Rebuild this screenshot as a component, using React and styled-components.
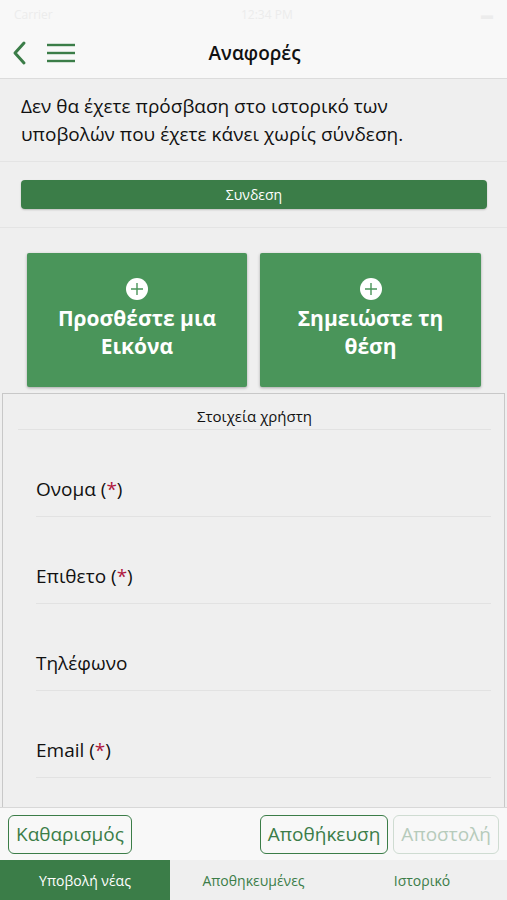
import React from "react";
import styled, { createGlobalStyle } from "styled-components";

const Global = createGlobalStyle`
  html, body { margin: 0; padding: 0; }
  body {
    background: #efefef;
    font-family: "Open Sans", "Liberation Sans", "DejaVu Sans", sans-serif;
    color: #111;
  }
`;

const green = "#3b7d48";
const tile = "#4a955a";

const Screen = styled.div`
  width: 507px;
  height: 900px;
  display: flex;
  flex-direction: column;
  background: #efefef;
  overflow: hidden;
`;

const StatusBar = styled.div`
  height: 28px;
  background: #f8f8f8;
  display: flex;
  align-items: center;
  justify-content: space-between;
  padding: 0 14px;
  font-size: 12px;
  color: #ececec;
`;

const NavBar = styled.div`
  height: 50px;
  background: #f8f8f8;
  border-bottom: 1px solid #dcdcdc;
  display: flex;
  align-items: center;
  padding: 0 12px;
`;

const NavIcons = styled.div`
  display: flex;
  align-items: center;
  gap: 18px;
`;

const Title = styled.div`
  flex: 1;
  text-align: center;
  font-size: 19px;
  font-weight: 600;
  margin-right: 62px;
`;

const Notice = styled.div`
  padding: 13px 21px 13px;
  font-size: 19px;
  line-height: 28px;
  border-bottom: 1px solid #e4e4e4;
`;

const LoginRow = styled.div`
  padding: 18px 20px 18px 21px;
  border-bottom: 1px solid #e4e4e4;
`;

const LoginButton = styled.button`
  width: 100%;
  height: 29px;
  border: none;
  border-radius: 4px;
  background: ${green};
  color: #fff;
  font-family: inherit;
  font-size: 14px;
  box-shadow: 0 1px 2px rgba(0,0,0,0.2);
`;

const Tiles = styled.div`
  display: grid;
  grid-template-columns: 220px 221px;
  gap: 13px;
  padding: 25px 26px 6px 27px;
`;

const Tile = styled.div`
  height: 134px;
  background: ${tile};
  border-radius: 2px;
  box-shadow: 0 1px 3px rgba(0,0,0,0.3);
  color: #fff;
  display: flex;
  flex-direction: column;
  align-items: center;
  justify-content: center;
  text-align: center;
  font-size: 21px;
  font-weight: 700;
  line-height: 28px;
  padding-bottom: 2px;
  box-sizing: border-box;
`;

const PlusWrap = styled.div`
  margin-bottom: 4px;
  height: 22px;
`;

const Panel = styled.div`
  flex: 1;
  margin: 0 2px;
  border: 1px solid #c8c8c8;
  border-bottom: none;
  display: flex;
  flex-direction: column;
  padding: 0 13px 0 15px;
`;

const PanelHead = styled.div`
  text-align: center;
  font-size: 15px;
  height: 35px;
  line-height: 45px;
  border-bottom: 1px solid #e2e2e2;
`;

const Field = styled.div`
  height: 87px;
  margin-left: 18px;
  display: flex;
  align-items: flex-end;
  padding-bottom: 14px;
  box-sizing: border-box;
  border-bottom: 1px solid #e2e2e2;
  font-size: 19px;
`;

const Star = styled.span`
  color: #b0173e;
`;

const ActionBar = styled.div`
  height: 52px;
  background: #f8f8f8;
  border-top: 1px solid #d8d8d8;
  display: flex;
  align-items: center;
  padding: 0 8px;
  gap: 5px;
`;

const ActionButton = styled.button`
  height: 39px;
  padding: 0 7px;
  border: 1.5px solid ${({ disabled }) => (disabled ? "#cfdcd2" : green)};
  border-radius: 6px;
  background: transparent;
  color: ${({ disabled }) => (disabled ? "#b6cbbb" : green)};
  font-family: inherit;
  font-size: 19px;
  margin-left: ${({ $push }) => ($push ? "auto" : "0")};
`;

const TabBar = styled.div`
  height: 40px;
  display: grid;
  grid-template-columns: 170px 167px 170px;
  background: #efefef;
`;

const Tab = styled.div`
  display: flex;
  align-items: center;
  justify-content: center;
  font-size: 14px;
  background: ${({ $active }) => ($active ? green : "transparent")};
  color: ${({ $active }) => ($active ? "#fff" : green)};
`;

const Back = () => (
  <svg width="16" height="26" viewBox="0 0 16 26">
    <path d="M12 3 L3 13 L12 23" fill="none" stroke={green} strokeWidth="3" strokeLinecap="round" strokeLinejoin="round" />
  </svg>
);

const Menu = () => (
  <svg width="30" height="22" viewBox="0 0 30 22">
    <g stroke={green} strokeWidth="2.4">
      <line x1="1" y1="3" x2="29" y2="3" />
      <line x1="1" y1="11" x2="29" y2="11" />
      <line x1="1" y1="19" x2="29" y2="19" />
    </g>
  </svg>
);

const Plus = () => (
  <svg width="22" height="22" viewBox="0 0 22 22">
    <circle cx="11" cy="11" r="11" fill="#fff" />
    <path d="M11 5 V17 M5 11 H17" stroke={tile} strokeWidth="1.4" />
  </svg>
);

const App = () => (
  <Screen>
    <Global />
    <StatusBar>
      <span>Carrier</span>
      <span>12:34 PM</span>
      <span>▬</span>
    </StatusBar>
    <NavBar>
      <NavIcons>
        <Back />
        <Menu />
      </NavIcons>
      <Title>Αναφορές</Title>
    </NavBar>
    <Notice>Δεν θα έχετε πρόσβαση στο ιστορικό των υποβολών που έχετε κάνει χωρίς σύνδεση.</Notice>
    <LoginRow>
      <LoginButton>Συνδεση</LoginButton>
    </LoginRow>
    <Tiles>
      <Tile>
        <PlusWrap><Plus /></PlusWrap>
        Προσθέστε μια<br />Εικόνα
      </Tile>
      <Tile>
        <PlusWrap><Plus /></PlusWrap>
        Σημειώστε τη<br />θέση
      </Tile>
    </Tiles>
    <Panel>
      <PanelHead>Στοιχεία χρήστη</PanelHead>
      <Field>Ονομα (<Star>*</Star>)</Field>
      <Field>Επιθετο (<Star>*</Star>)</Field>
      <Field>Τηλέφωνο</Field>
      <Field>Email (<Star>*</Star>)</Field>
    </Panel>
    <ActionBar>
      <ActionButton>Καθαρισμός</ActionButton>
      <ActionButton $push>Αποθήκευση</ActionButton>
      <ActionButton disabled>Αποστολή</ActionButton>
    </ActionBar>
    <TabBar>
      <Tab $active>Υποβολή νέας</Tab>
      <Tab>Αποθηκευμένες</Tab>
      <Tab>Ιστορικό</Tab>
    </TabBar>
  </Screen>
);

export default App;
